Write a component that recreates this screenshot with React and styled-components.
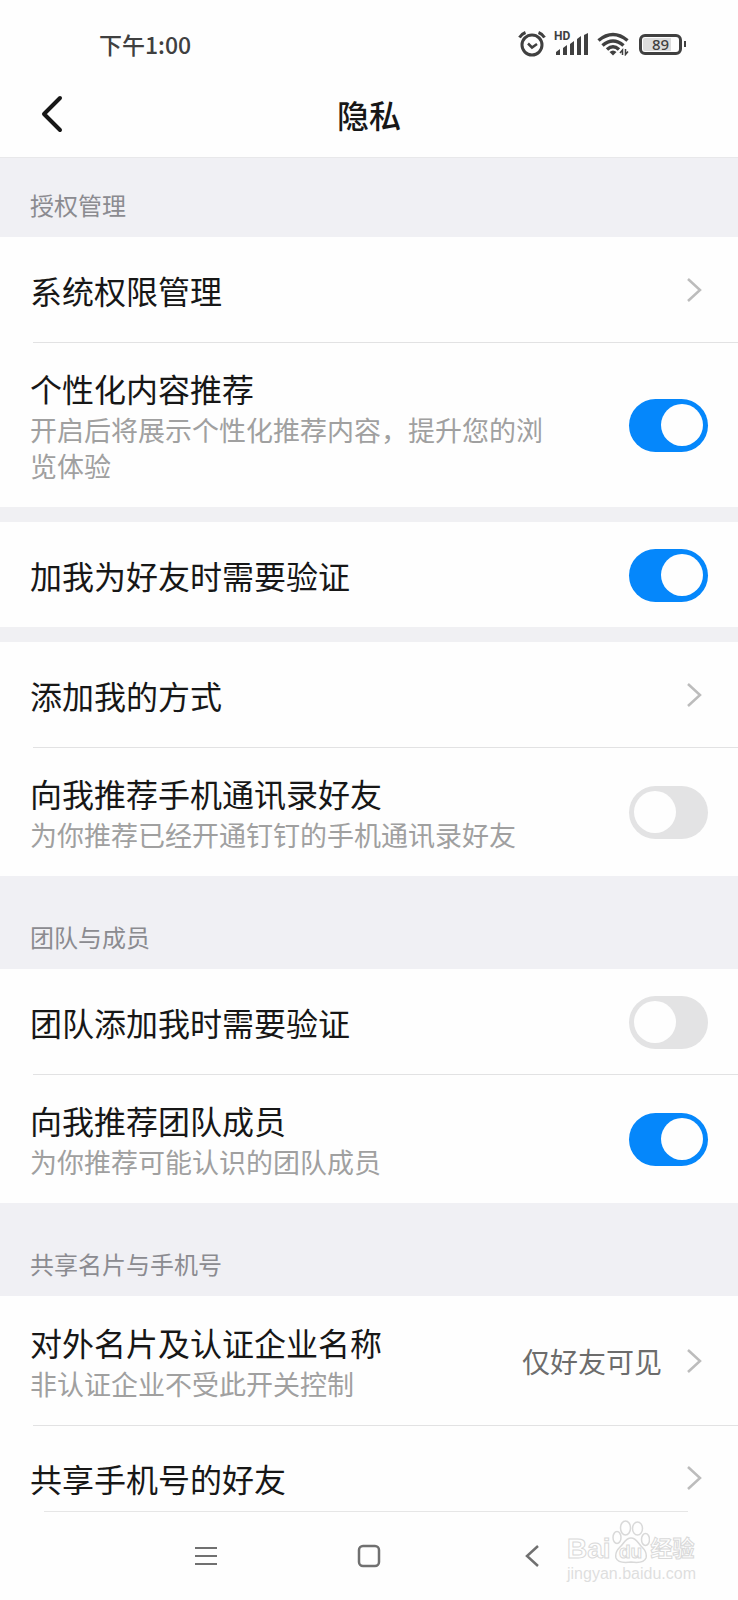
import { useState } from "react";
import styled, { createGlobalStyle, css } from "styled-components";

const GlobalStyle = createGlobalStyle`
  *, *::before, *::after {
    box-sizing: border-box;
  }
  body {
    margin: 0;
    background: #fefefe;
    font-family: "Noto Sans CJK SC", sans-serif;
    color: #171717;
  }
  button {
    border: 0;
    padding: 0;
    background: none;
    font: inherit;
    color: inherit;
    cursor: pointer;
  }
`;

const Screen = styled.div`
  position: relative;
  display: flex;
  flex-direction: column;
  height: 100vh;
  background: #fefefe;
`;

const StatusBar = styled.div`
  flex: none;
  display: flex;
  align-items: center;
  justify-content: space-between;
  height: 70px;
  padding: 18px 52px 0 99px;
  color: #404040;
`;

const Time = styled.span`
  font-size: 23px;
  font-weight: 500;
  line-height: 36px;
`;

const StatusIcons = styled.div`
  display: flex;
  align-items: center;
  gap: 8px;
`;

const Battery = styled.div`
  display: flex;
  align-items: center;
  gap: 2px;
  margin-left: 2px;

  &::after {
    content: "";
    width: 2px;
    height: 6px;
    background: #404040;
  }
`;

const BatteryBody = styled.span`
  display: flex;
  align-items: center;
  justify-content: center;
  width: 43px;
  height: 21px;
  border: 3px solid #404040;
  border-radius: 6px;
  background: linear-gradient(to right, #dcdcdc 80%, #fefefe 80%) content-box;
  padding: 1px;
  font-family: "Noto Sans", sans-serif;
  font-size: 15px;
  font-weight: 500;
  line-height: 15px;
`;

const TitleBar = styled.header`
  flex: none;
  display: grid;
  grid-template-columns: 80px 1fr 80px;
  align-items: center;
  height: 88px;
  border-bottom: 1px solid #e8e8ea;
`;

const BackButton = styled.button`
  display: flex;
  justify-content: flex-end;
  width: 63px;
  height: 60px;
  align-items: center;
`;

const Title = styled.h1`
  margin: 0;
  font-size: 32px;
  font-weight: 500;
  line-height: 44px;
  text-align: center;
`;

const List = styled.main`
  flex: 1;
  min-height: 0;
  overflow-y: auto;
  scrollbar-width: none;
`;

const SectionTitle = styled.h2`
  display: flex;
  align-items: flex-end;
  height: ${(props) => (props.$first ? "79px" : "93px")};
  margin: 0;
  padding: 0 30px 14px;
  background: #f0f0f4;
  color: #8b8b90;
  font-size: 24px;
  font-weight: 400;
  line-height: 36px;
`;

const Spacer = styled.div`
  height: 15px;
  background: #f0f0f3;
`;

const Group = styled.div`
  > * + *::before {
    content: "";
    position: absolute;
    top: 0;
    left: 33px;
    right: 0;
    height: 1px;
    background: #e2e2e3;
  }
`;

const rowStyles = css`
  position: relative;
  display: flex;
  align-items: center;
  width: 100%;
  min-height: 105px;
  padding: 24px 30px 23px;
  text-align: left;
  cursor: pointer;
`;

const LinkRow = styled.button`
  ${rowStyles}
`;

const SwitchRow = styled.label`
  ${rowStyles}
`;

const RowText = styled.span`
  flex: 1;
  display: flex;
  flex-direction: column;
  gap: 2px;
  padding-right: ${(props) => (props.$wide ? "20px" : "70px")};
`;

const RowTitle = styled.span`
  font-size: 32px;
  line-height: 44px;
`;

const RowNote = styled.span`
  color: #a0a0a0;
  font-size: 27px;
  line-height: 36px;
`;

const RowValue = styled.span`
  margin-right: 16px;
  color: #6c6c6c;
  font-size: 28px;
  line-height: 44px;
`;

const Switch = styled.input`
  flex: none;
  appearance: none;
  display: flex;
  align-items: center;
  justify-content: flex-start;
  width: 79px;
  height: 53px;
  margin: 0;
  padding: 0 5px;
  border-radius: 27px;
  background: #e3e3e4;
  cursor: pointer;

  &::before {
    content: "";
    width: 42px;
    height: 42px;
    border-radius: 50%;
    background: #fefefe;
  }

  &:checked {
    justify-content: flex-end;
    background: #0587fb;
  }
`;

const NavBar = styled.nav`
  flex: none;
  display: flex;
  justify-content: center;
  height: 89px;
  color: #707070;

  &::before {
    content: "";
    position: absolute;
    left: 44px;
    right: 50px;
    height: 1px;
    background: #e6e6e6;
  }
`;

const NavButton = styled.button`
  display: flex;
  align-items: center;
  justify-content: center;
  width: 163px;
`;

const Watermark = styled.div`
  position: absolute;
  right: 39px;
  bottom: 16px;
  display: flex;
  flex-direction: column;
  width: 132px;
  color: #fefefe;
  font-family: "Liberation Sans", "Noto Sans CJK SC", sans-serif;
  -webkit-text-stroke: 1px #d9d9d9;
  pointer-events: none;
`;

const WatermarkBrand = styled.span`
  display: flex;
  align-items: flex-end;
  font-size: 28px;
  font-weight: 700;
  line-height: 30px;
`;

const WatermarkName = styled.span`
  font-size: 22px;
`;

const WatermarkPaw = styled.span`
  position: relative;
  display: flex;
  margin: 0 1px;
`;

const WatermarkDu = styled.span`
  position: absolute;
  left: 0;
  right: 0;
  bottom: 0;
  font-size: 19px;
  line-height: 24px;
  text-align: center;
`;

const WatermarkUrl = styled.span`
  color: #dedede;
  font-size: 16px;
  line-height: 20px;
  -webkit-text-stroke: 0;
`;

const AlarmIcon = () => (
  <svg width="28" height="26" viewBox="0 0 28 26" fill="none" stroke="currentColor" aria-hidden="true">
    <circle cx="14" cy="14" r="10" strokeWidth="3" />
    <path d="M10 12.5l4 4 5-3.5" strokeWidth="2.5" />
    <path d="M1.5 6.5Q3.5 3 7.5 1.5M26.5 6.5Q24.5 3 20.5 1.5" strokeWidth="3" />
  </svg>
);

const SignalBox = styled.span`
  position: relative;
  display: flex;
`;

const HdMark = styled.span`
  position: absolute;
  top: -2px;
  left: 0;
  font-family: Roboto, sans-serif;
  font-size: 12px;
  font-weight: 700;
  line-height: 12px;
`;

const SignalIcon = () => (
  <svg width="35" height="24" viewBox="0 0 35 24" fill="currentColor" aria-hidden="true">
    <path d="M2 23v-3l4-3v6zM9 23v-7l4-3v10zM16 23V12l4-3v14zM23 23V7l4-3v19zM30 23V3l4-2v22z" />
  </svg>
);

const WifiIcon = () => (
  <svg width="32" height="24" viewBox="0 0 32 24" fill="none" stroke="currentColor" aria-hidden="true">
    <path d="M1.5 8.5Q16-3.5 30.5 8.5" strokeWidth="3.5" />
    <path d="M5.5 13.5Q16 4.5 26.5 13.5" strokeWidth="3.5" />
    <path d="M10 17.5Q16 12 22 17.5" strokeWidth="3.5" />
    <path d="M12.5 20Q16 17 19.5 20L16 23.5z" fill="currentColor" stroke="none" />
    <path d="M25.5 23v-5l-2.5 3M28.5 17v5.5l2.5-3" strokeWidth="1.5" />
  </svg>
);

const BackIcon = () => (
  <svg width="22" height="38" viewBox="0 0 22 38" fill="none" stroke="currentColor" aria-hidden="true">
    <path d="M19 3L3 19l16 16" strokeWidth="4" strokeLinecap="round" strokeLinejoin="round" />
  </svg>
);

const ArrowIcon = () => (
  <svg width="30" height="28" viewBox="0 0 30 28" fill="none" stroke="#bcbcbc" aria-hidden="true">
    <path d="M10 3l12 11-12 11" strokeWidth="2.5" />
  </svg>
);

const PawIcon = () => (
  <svg width="38" height="44" viewBox="0 0 38 44" fill="#fefefe" stroke="#d9d9d9" strokeWidth="1.5" aria-hidden="true">
    <ellipse cx="13.5" cy="8" rx="5" ry="7" />
    <ellipse cx="25.5" cy="8.5" rx="5" ry="6.5" />
    <ellipse cx="5" cy="17.5" rx="4" ry="6" />
    <ellipse cx="33.5" cy="19.5" rx="4" ry="6" />
    <path d="M19 18c-6 0-7 6-11 9-4 4-5 7-4 11 2 5 8 5 15 4 7 1 13 1 15-4 1-4 0-7-4-11-4-3-5-9-11-9z" />
  </svg>
);

const LinkItem = ({ title, note, value }) => (
  <LinkRow type="button">
    <RowText $wide={Boolean(value)}>
      <RowTitle>{title}</RowTitle>
      {note && <RowNote>{note}</RowNote>}
    </RowText>
    {value && <RowValue>{value}</RowValue>}
    <ArrowIcon />
  </LinkRow>
);

const SwitchItem = ({ title, note, defaultOn = false }) => {
  const [on, setOn] = useState(defaultOn);

  return (
    <SwitchRow>
      <RowText>
        <RowTitle>{title}</RowTitle>
        {note && <RowNote>{note}</RowNote>}
      </RowText>
      <Switch
        type="checkbox"
        role="switch"
        checked={on}
        onChange={(e) => setOn(e.target.checked)}
      />
    </SwitchRow>
  );
};

const App = () => {
  return (
    <Screen>
      <GlobalStyle />
      <StatusBar>
        <Time>下午1:00</Time>
        <StatusIcons>
          <AlarmIcon />
          <SignalBox>
            <HdMark>HD</HdMark>
            <SignalIcon />
          </SignalBox>
          <WifiIcon />
          <Battery>
            <BatteryBody>89</BatteryBody>
          </Battery>
        </StatusIcons>
      </StatusBar>
      <TitleBar>
        <BackButton type="button" aria-label="返回">
          <BackIcon />
        </BackButton>
        <Title>隐私</Title>
      </TitleBar>

      <List>
        <SectionTitle $first>授权管理</SectionTitle>
        <Group>
          <LinkItem title="系统权限管理" />
          <SwitchItem
            title="个性化内容推荐"
            note="开启后将展示个性化推荐内容，提升您的浏览体验"
            defaultOn
          />
        </Group>
        <Spacer />
        <Group>
          <SwitchItem title="加我为好友时需要验证" defaultOn />
        </Group>
        <Spacer />
        <Group>
          <LinkItem title="添加我的方式" />
          <SwitchItem
            title="向我推荐手机通讯录好友"
            note="为你推荐已经开通钉钉的手机通讯录好友"
          />
        </Group>

        <SectionTitle>团队与成员</SectionTitle>
        <Group>
          <SwitchItem title="团队添加我时需要验证" />
          <SwitchItem
            title="向我推荐团队成员"
            note="为你推荐可能认识的团队成员"
            defaultOn
          />
        </Group>

        <SectionTitle>共享名片与手机号</SectionTitle>
        <Group>
          <LinkItem
            title="对外名片及认证企业名称"
            note="非认证企业不受此开关控制"
            value="仅好友可见"
          />
          <LinkItem title="共享手机号的好友" />
        </Group>
      </List>

      <NavBar>
        <NavButton type="button" aria-label="菜单">
          <svg width="22" height="22" viewBox="0 0 22 22" stroke="currentColor" strokeWidth="2">
            <path d="M0 3h22M0 11h22M0 19h22" />
          </svg>
        </NavButton>
        <NavButton type="button" aria-label="主页">
          <svg width="24" height="24" viewBox="0 0 24 24" fill="none" stroke="currentColor" strokeWidth="2.5">
            <rect x="2" y="2" width="20" height="20" rx="4" />
          </svg>
        </NavButton>
        <NavButton type="button" aria-label="后退">
          <svg width="14" height="24" viewBox="0 0 14 24" fill="none" stroke="currentColor" strokeWidth="2.5">
            <path d="M13 2L2 12l11 10" />
          </svg>
        </NavButton>
      </NavBar>

      <Watermark>
        <WatermarkBrand>
          Bai
          <WatermarkPaw>
            <PawIcon />
            <WatermarkDu>du</WatermarkDu>
          </WatermarkPaw>
          <WatermarkName>经验</WatermarkName>
        </WatermarkBrand>
        <WatermarkUrl>jingyan.baidu.com</WatermarkUrl>
      </Watermark>
    </Screen>
  );
};

export default App;
